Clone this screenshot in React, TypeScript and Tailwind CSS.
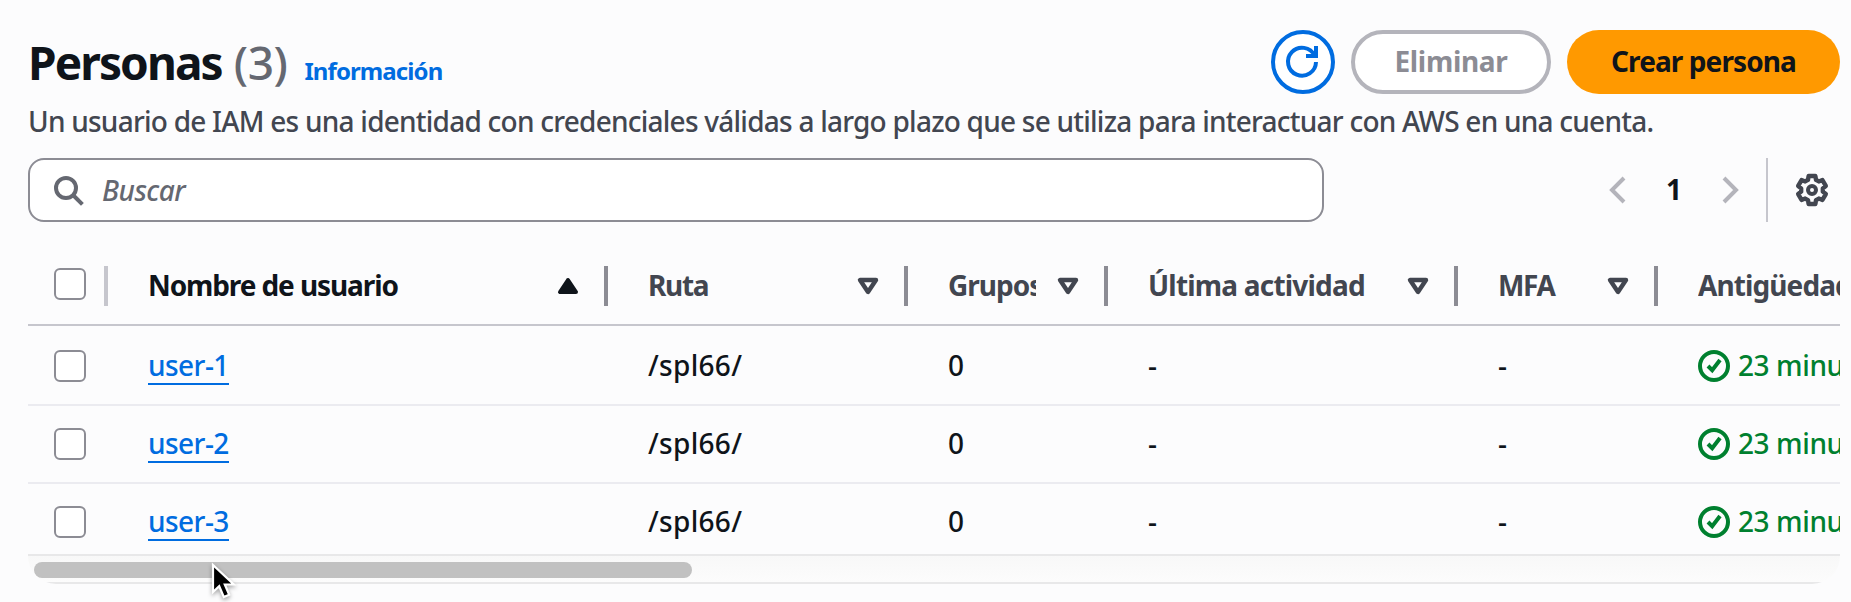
import type { ReactNode } from "react";

type IconProps = { className?: string; children: ReactNode };

function Icon({ className = "", children }: IconProps) {
  return (
    <svg
      viewBox="0 0 16 16"
      className={`size-8 shrink-0 overflow-visible ${className}`}
      fill="none"
      stroke="currentColor"
      strokeWidth="2"
      aria-hidden="true"
    >
      {children}
    </svg>
  );
}

// Outline of a six-toothed cog centred on (8, 8).
const gearPoints = Array.from({ length: 6 }, (_, i) => {
  const a = (i * Math.PI) / 3;
  const [s, c] = [Math.sin(a), Math.cos(a)];
  return [
    [5.1, -2],
    [7, -1.7],
    [7, 1.7],
    [5.1, 2],
  ]
    .map(([r, o]) => `${(8 + r * s + o * c).toFixed(2)},${(8 - r * c + o * s).toFixed(2)}`)
    .join(" ");
}).join(" ");

function Checkbox() {
  return <span className="size-8 shrink-0 rounded-md border-2 border-[#8c8c94] bg-white" />;
}

type Column = { label: string; width: string; tracking: string; sort?: "asc" | "none" };

const columns: Column[] = [
  { label: "Nombre de usuario", width: "w-[500px]", tracking: "tracking-[-1.1px]", sort: "asc" },
  { label: "Ruta", width: "w-[300px]", tracking: "tracking-[-1.3px]", sort: "none" },
  { label: "Grupos", width: "w-[200px]", tracking: "tracking-[-1px]", sort: "none" },
  { label: "Última actividad", width: "w-[350px]", tracking: "tracking-[-0.8px]", sort: "none" },
  { label: "MFA", width: "w-[200px]", tracking: "tracking-[-1.4px]", sort: "none" },
  { label: "Antigüedad de la contraseña", width: "w-[460px]", tracking: "tracking-[-0.9px]" },
];

function HeaderCell({ label, width, tracking, sort }: Column) {
  const active = sort === "asc";
  return (
    <div className={`flex shrink-0 items-center pl-10 ${width} ${active ? "text-[#0f141a]" : "text-[#424650]"}`}>
      <span className={`min-w-0 flex-1 overflow-hidden whitespace-nowrap font-bold leading-9 ${tracking}`}>
        {label}
      </span>
      {sort && (
        <>
          <Icon className="mt-0.5 ml-4 mr-5">
            {active ? (
              <path d="M4 11h8L8 5z" fill="currentColor" strokeLinejoin="round" />
            ) : (
              <path d="M4 5h8l-4 6z" strokeWidth="2.2" strokeLinejoin="round" />
            )}
          </Icon>
          <span className="mt-0.5 h-10 w-1 shrink-0 bg-[#8c8c94]" />
        </>
      )}
    </div>
  );
}

const users = ["user-1", "user-2", "user-3"];

function Row({ name, first }: { name: string; first: boolean }) {
  const cell = "-mt-0.5 shrink-0 pl-10 leading-9";
  return (
    <div className={`flex w-[2090px] shrink-0 items-center border-b-2 border-[#ebebf0] ${first ? "h-20 pt-0.5" : "h-[78px]"}`}>
      <div className="flex w-20 shrink-0 pl-[26px]">
        <Checkbox />
      </div>
      <div className="flex w-[500px] shrink-0 pl-10">
        <a className="border-b-2 border-[#006ce0] leading-9 tracking-[-0.55px] text-[#006ce0]">{name}</a>
      </div>
      <div className={`w-[300px] tracking-[0.3px] ${cell}`}>/spl66/</div>
      <div className={`w-[200px] ${cell}`}>0</div>
      <div className={`w-[350px] ${cell}`}>-</div>
      <div className={`w-[200px] ${cell}`}>-</div>
      <div className="flex w-[460px] shrink-0 items-center gap-2 pl-10 text-[#00802f]">
        <Icon>
          <circle cx="8" cy="8" r="7" />
          <path d="m5 8 2.1 2.1L11 5" />
        </Icon>
        <span className="-mt-0.5 whitespace-nowrap leading-9 tracking-[-0.4px]">23 minutos</span>
      </div>
    </div>
  );
}

export default function App() {
  return (
    <div className="relative flex h-[602px] w-[1851px] flex-col overflow-hidden bg-[#fcfcfd] pr-[11px] pl-7 font-['Noto_Sans',sans-serif] text-[28px] font-medium text-[#0f141a]">
      <header className="mt-[30px] flex h-16 items-center justify-between">
        <div className="flex items-baseline whitespace-nowrap">
          <h1 className="text-[46px] font-bold leading-[62px] tracking-[-1.9px]">
            Personas <span className="ml-0.5 font-medium tracking-[-0.5px] text-[#656871]">(3)</span>
          </h1>
          <a className="ml-[17px] text-2xl font-bold tracking-[-0.9px] text-[#006ce0]">Información</a>
        </div>
        <div className="flex gap-4 font-bold">
          <button className="flex size-16 items-center justify-center rounded-full border-4 border-[#006ce0] bg-white text-[#006ce0]">
            <Icon className="mr-0.5">
              <path d="M10 5h5V0" />
              <path d="M15 8a7 7 0 1 1-.7-3.2" />
            </Icon>
          </button>
          <button className="h-16 w-[200px] rounded-full border-4 border-[#b4b4bb] bg-white pb-0.5 leading-9 tracking-[-0.3px] text-[#8c8c94]">
            Eliminar
          </button>
          <button className="h-16 w-[273px] rounded-full bg-[#ff9900] pb-0.5 leading-9 tracking-[-0.9px]">
            Crear persona
          </button>
        </div>
      </header>

      <p className="mt-[9px] whitespace-nowrap leading-9 tracking-[-0.76px] text-[#424650]">
        Un usuario de IAM es una identidad con credenciales válidas a largo plazo que se utiliza para interactuar con AWS
        en una cuenta.
      </p>

      <div className="mt-[19px] flex h-16 items-center">
        <div className="flex h-16 w-[1296px] items-center gap-[18px] rounded-2xl border-2 border-[#8c8c94] bg-white pl-[22px] text-[#656871]">
          <Icon>
            <circle cx="7" cy="7" r="5" />
            <path d="m10.5 10.5 4.7 4.7" />
          </Icon>
          <span className="italic leading-9 tracking-[-0.5px]">Buscar</span>
        </div>
        <div className="ml-auto flex items-center text-[#b4b4bb]">
          <Icon>
            <path d="M11 2 5 8l6 6" />
          </Icon>
          <span className="mb-0.5 w-20 text-center font-bold leading-9 text-[#0f141a]">1</span>
          <Icon>
            <path d="m5 2 6 6-6 6" />
          </Icon>
          <span className="mx-5 h-16 w-0.5 bg-[#c6c6cd]" />
          <Icon className="mr-3 ml-2 text-[#424650]">
            <polygon points={gearPoints} strokeWidth="2.2" strokeLinejoin="round" />
            <circle cx="8" cy="8" r="2" />
          </Icon>
        </div>
      </div>

      <section className="mt-6 flex h-[308px] flex-col overflow-hidden">
        <div className="flex h-20 w-[2090px] shrink-0 border-b-2 border-[#c6c6cd]">
          <div className="flex w-20 shrink-0 items-center justify-between pl-[26px]">
            <span className="-mt-0.5 flex">
              <Checkbox />
            </span>
            <span className="mt-0.5 h-10 w-1 bg-[#c6c6cd]" />
          </div>
          {columns.map((c) => (
            <HeaderCell key={c.label} {...c} />
          ))}
        </div>
        {users.map((u, i) => (
          <Row key={u} name={u} first={i === 0} />
        ))}
      </section>
      <div className="h-[30px] shrink-0 overflow-hidden rounded-b-[28px]">
        <div className="h-full border-y-2 border-y-[#e8e8e9] bg-linear-to-b from-[#f8f8f8] to-[#fcfcfc] px-1.5 pt-1.5">
          <div className="h-4 w-[658px] rounded-full bg-[#c1c1c1]" />
        </div>
      </div>

      <svg
        viewBox="0 0 24 36"
        className="absolute top-[562px] left-[211px] h-9 w-6 overflow-visible drop-shadow-[0_2px_2px_rgba(0,0,0,0.35)]"
        aria-hidden="true"
      >
        <path
          d="M2 3v27l6.2-5.8L12.8 35l5.4-2.3-4.4-10.2h9z"
          fill="#000"
          stroke="#fff"
          strokeWidth="2.2"
        />
      </svg>
    </div>
  );
}
